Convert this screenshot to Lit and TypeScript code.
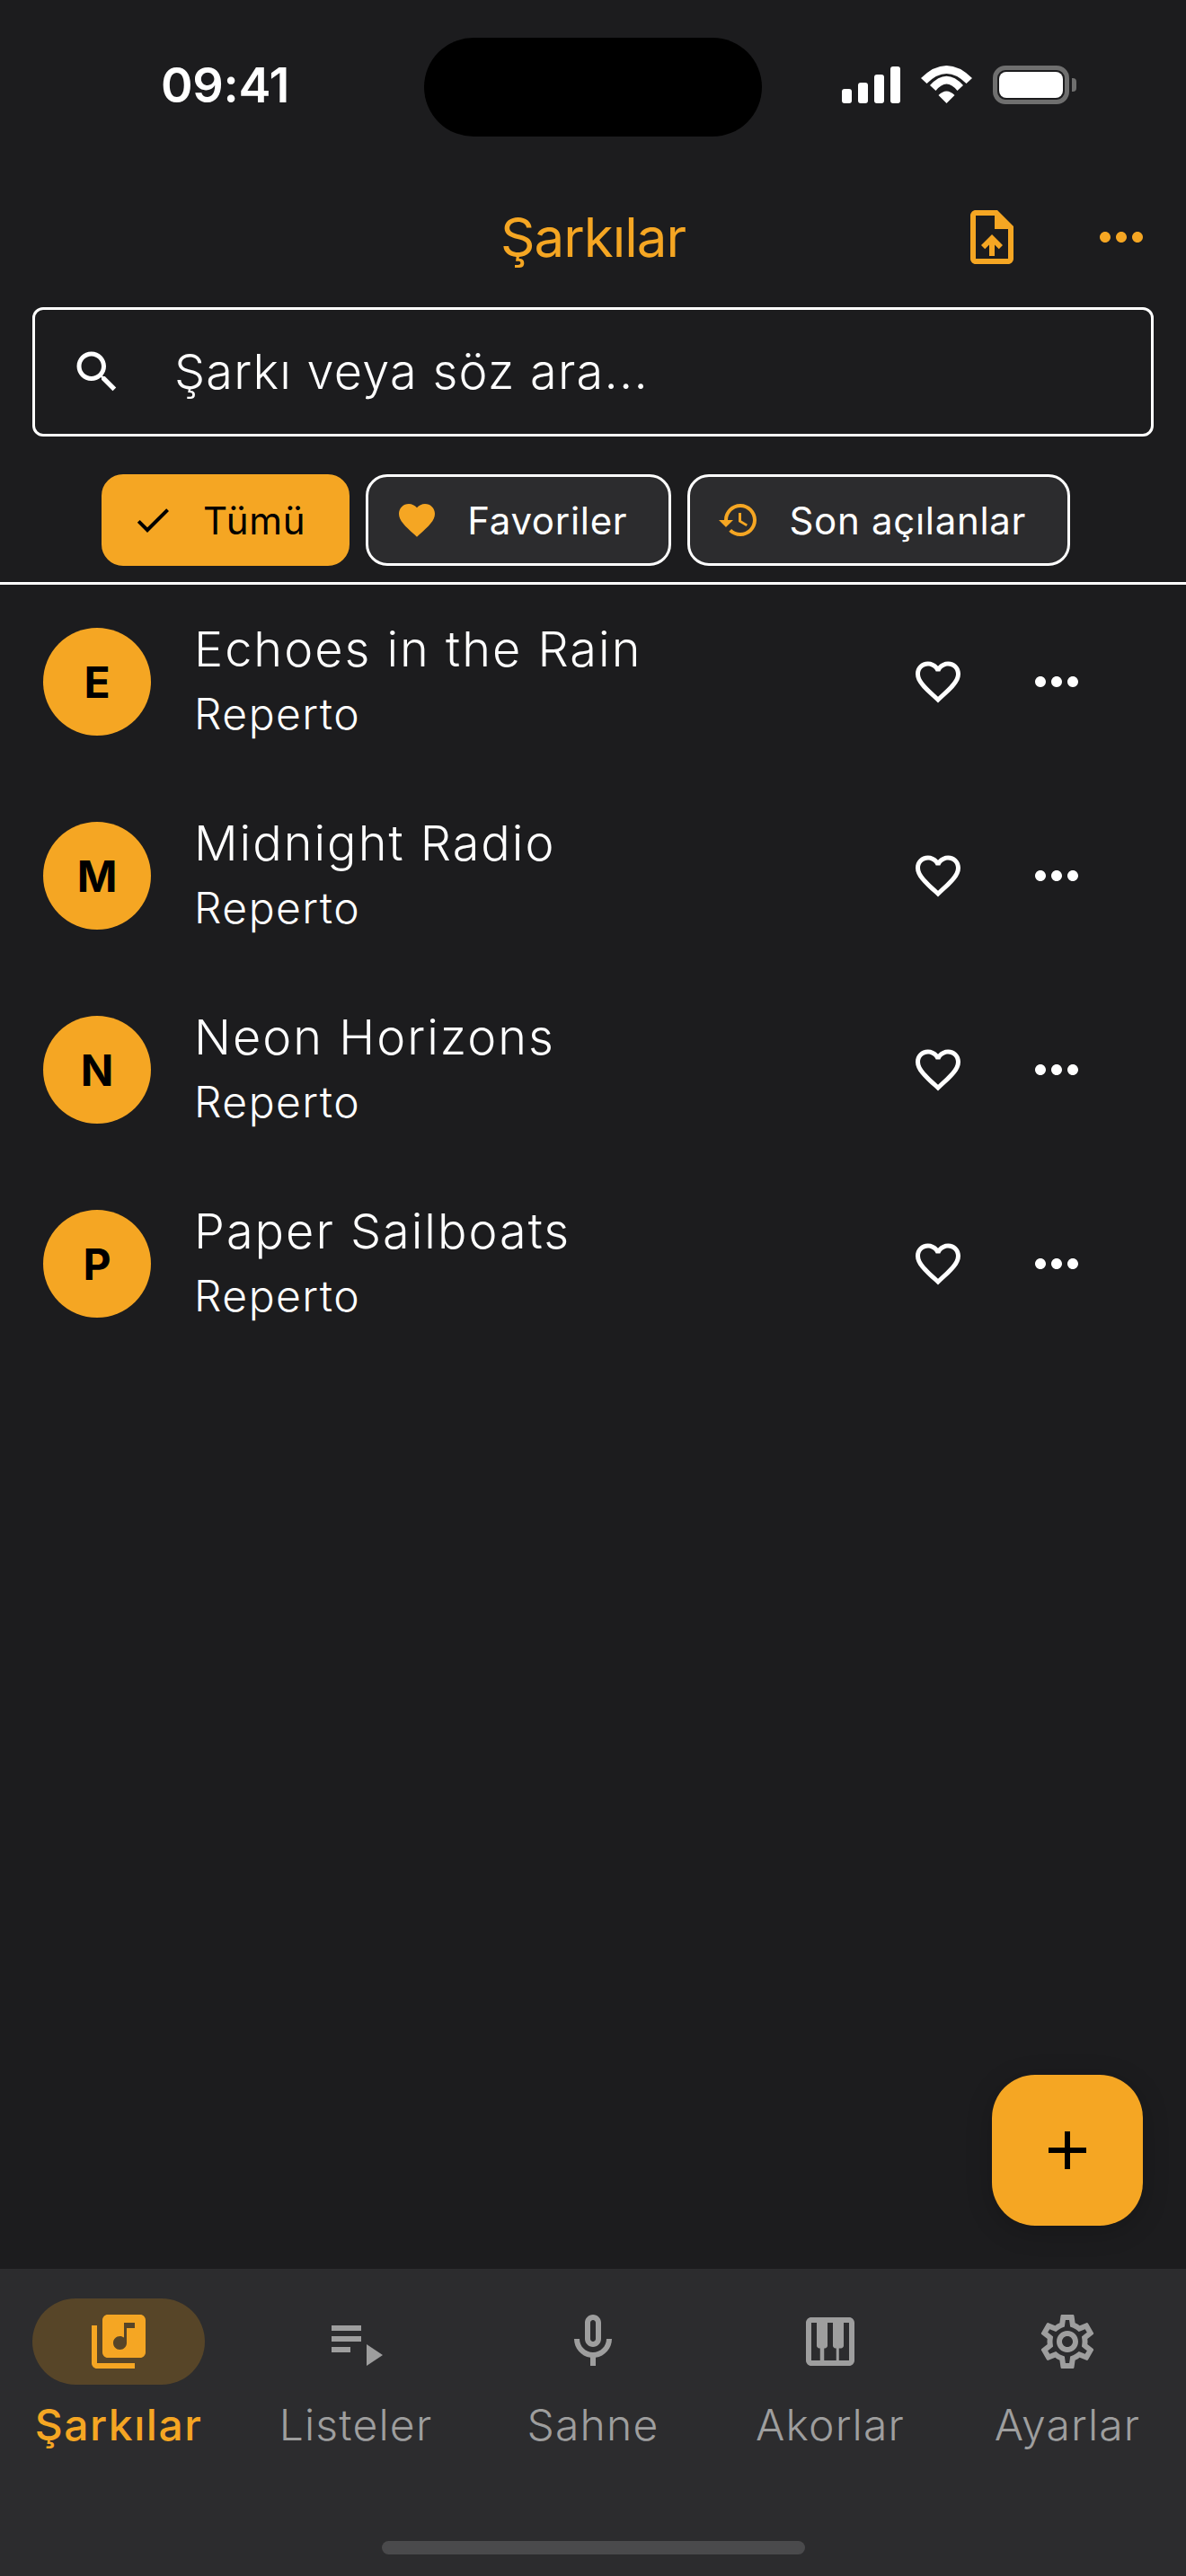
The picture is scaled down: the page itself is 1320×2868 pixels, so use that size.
import { LitElement, html, css, svg } from "lit";
import { customElement } from "lit/decorators.js";

const P = {
  upload: "M14 2H6c-1.1 0-2 .9-2 2v16c0 1.1.89 2 1.99 2H18c1.1 0 2-.9 2-2V8l-6-6zm4 18H6V4h7v5h5v11zM8 15.01l1.41 1.41L11 14.84V19h2v-4.16l1.59 1.59L16 15.01 12.01 11z",
  more: "M6 10c-1.1 0-2 .9-2 2s.9 2 2 2 2-.9 2-2-.9-2-2-2zm12 0c-1.1 0-2 .9-2 2s.9 2 2 2 2-.9 2-2-.9-2-2-2zm-6 0c-1.1 0-2 .9-2 2s.9 2 2 2 2-.9 2-2-.9-2-2-2z",
  search: "M15.5 14h-.79l-.28-.27C15.41 12.59 16 11.11 16 9.5 16 5.91 13.09 3 9.5 3S3 5.91 3 9.5 5.91 16 9.5 16c1.61 0 3.09-.59 4.23-1.57l.27.28v.79l5 4.99L20.49 19l-4.99-5zm-6 0C7.01 14 5 11.99 5 9.5S7.01 5 9.5 5 14 7.01 14 9.5 11.99 14 9.5 14z",
  check: "M9 16.17L4.83 12l-1.41 1.41L9 19 21 7l-1.41-1.41z",
  heart: "M12 21.35l-1.45-1.32C5.4 15.36 2 12.28 2 8.5 2 5.42 4.42 3 7.5 3c1.74 0 3.41.81 4.5 2.09C13.09 3.81 14.76 3 16.5 3 19.58 3 22 5.42 22 8.5c0 3.78-3.4 6.86-8.55 11.54L12 21.35z",
  heartO: "M16.5 3c-1.74 0-3.41.81-4.5 2.09C10.91 3.81 9.24 3 7.5 3 4.42 3 2 5.42 2 8.5c0 3.78 3.4 6.86 8.55 11.54L12 21.35l1.45-1.32C18.6 15.36 22 12.28 22 8.5 22 5.42 19.58 3 16.5 3zm-4.4 15.55l-.1.1-.1-.1C7.14 14.24 4 11.39 4 8.5 4 6.5 5.5 5 7.5 5c1.54 0 3.04.99 3.57 2.36h1.87C13.46 5.99 14.96 5 16.5 5c2 0 3.5 1.5 3.5 3.5 0 2.89-3.14 5.74-7.9 10.05z",
  history: "M13 3c-4.97 0-9 4.03-9 9H1l3.89 3.89.07.14L9 12H6c0-3.87 3.13-7 7-7s7 3.13 7 7-3.13 7-7 7c-1.93 0-3.68-.79-4.94-2.06l-1.42 1.42C8.27 19.99 10.51 21 13 21c4.97 0 9-4.03 9-9s-4.03-9-9-9zm-1 5v5l4.28 2.54.72-1.21-3.5-2.08V8H12z",
  add: "M19 13h-6v6h-2v-6H5v-2h6V5h2v6h6v2z",
  library: "M20 2H8c-1.1 0-2 .9-2 2v12c0 1.1.9 2 2 2h12c1.1 0 2-.9 2-2V4c0-1.1-.9-2-2-2zm-2 5h-3v5.5c0 1.38-1.12 2.5-2.5 2.5S10 13.88 10 12.5s1.12-2.5 2.5-2.5c.57 0 1.08.19 1.5.51V5h4v2zM4 6H2v14c0 1.1.9 2 2 2h14v-2H4V6z",
  playlist: "M3 10h11v2H3zM3 6h11v2H3zM3 14h7v2H3zM16 13v8l6-4z",
  mic: "M12 14c1.66 0 3-1.34 3-3V5c0-1.66-1.34-3-3-3S9 3.34 9 5v6c0 1.66 1.34 3 3 3zm-1-9c0-.55.45-1 1-1s1 .45 1 1v6c0 .55-.45 1-1 1s-1-.45-1-1V5zm6 6c0 2.76-2.24 5-5 5s-5-2.24-5-5H5c0 3.53 2.61 6.43 6 6.92V21h2v-3.08c3.39-.49 6-3.39 6-6.92h-2z",
  piano: "M19 3H5C3.9 3 3 3.9 3 5v14c0 1.1.9 2 2 2h14c1.1 0 2-.9 2-2V5C21 3.9 20.1 3 19 3zM14 14.5h.25V19h-4.5v-4.5H10c.55 0 1-.45 1-1V5h2v8.5C13 14.05 13.45 14.5 14 14.5zM5 5h2v8.5c0 .55.45 1 1 1h.25V19H5V5zM19 19h-3.75v-4.5H16c.55 0 1-.45 1-1V5h2V19z",
  gear: "M19.43 12.98c.04-.32.07-.64.07-.98 0-.34-.03-.66-.07-.98l2.11-1.65c.19-.15.24-.42.12-.64l-2-3.46c-.09-.16-.26-.25-.44-.25-.06 0-.12.01-.17.03l-2.49 1c-.52-.4-1.08-.73-1.69-.98l-.38-2.65C14.46 2.18 14.25 2 14 2h-4c-.25 0-.46.18-.49.42l-.38 2.65c-.61.25-1.17.59-1.69.98l-2.49-1c-.06-.02-.12-.03-.18-.03-.17 0-.34.09-.43.25l-2 3.46c-.13.22-.07.49.12.64l2.11 1.65c-.04.32-.07.65-.07.98 0 .33.03.66.07.98l-2.11 1.65c-.19.15-.24.42-.12.64l2 3.46c.09.16.26.25.44.25.06 0 .12-.01.17-.03l2.49-1c.52.4 1.08.73 1.69.98l.38 2.65c.03.24.24.42.49.42h4c.25 0 .46-.18.49-.42l.38-2.65c.61-.25 1.17-.59 1.69-.98l2.49 1c.06.02.12.03.18.03.17 0 .34-.09.43-.25l2-3.46c.12-.22.07-.49-.12-.64l-2.11-1.65zm-1.98-1.71c.04.31.05.52.05.73 0 .21-.02.43-.05.73l-.14 1.13.89.7 1.08.84-.7 1.21-1.27-.51-1.04-.42-.9.68c-.43.32-.84.56-1.25.73l-1.06.43-.16 1.13-.2 1.35h-1.4l-.19-1.35-.16-1.13-1.06-.43c-.43-.18-.83-.41-1.23-.71l-.91-.7-1.06.43-1.27.51-.7-1.21 1.08-.84.89-.7-.14-1.13c-.03-.31-.05-.54-.05-.74s.02-.43.05-.73l.14-1.13-.89-.7-1.08-.84.7-1.21 1.27.51 1.04.42.9-.68c.43-.32.84-.56 1.25-.73l1.06-.43.16-1.13.2-1.35h1.39l.19 1.35.16 1.13 1.06.43c.43.18.83.41 1.23.71l.91.7 1.06-.43 1.27-.51.7 1.21-1.07.85-.89.7.14 1.13zM12 8c-2.21 0-4 1.79-4 4s1.79 4 4 4 4-1.79 4-4-1.79-4-4-4zm0 6c-1.1 0-2-.9-2-2s.9-2 2-2 2 .9 2 2-.9 2-2 2z",
};

const ic = (d: string, cls: string) =>
  html`<svg class="ic ${cls}" viewBox="0 0 24 24" fill-rule="evenodd">${svg`<path d=${d}></path>`}</svg>`;

const songs = ["Echoes in the Rain", "Midnight Radio", "Neon Horizons", "Paper Sailboats"];
const chips = [
  { label: "Tümü", icon: P.check, on: true },
  { label: "Favoriler", icon: P.heart, on: false },
  { label: "Son açılanlar", icon: P.history, on: false },
];
const tabs = [
  { label: "Şarkılar", icon: P.library, on: true },
  { label: "Listeler", icon: P.playlist, on: false },
  { label: "Sahne", icon: P.mic, on: false },
  { label: "Akorlar", icon: P.piano, on: false },
  { label: "Ayarlar", icon: P.gear, on: false },
];

@customElement("app-root")
export class AppRoot extends LitElement {
  static styles = css`
    :host {
      display: block;
      width: 1320px;
      height: 2868px;
      background: #1c1c1e;
      font-family: Inter, "Noto Sans", sans-serif;
      color: #fff;
      overflow: hidden;
    }
    * { box-sizing: border-box; }
    .app { position: relative; height: 100%; display: flex; flex-direction: column; }
    .ic { display: block; flex: none; fill: currentColor; }
    .s72 { width: 72px; height: 72px; }
    .s60 { width: 60px; height: 60px; }
    .s48 { width: 48px; height: 48px; }

    .status { position: relative; height: 192px; flex: none; display: flex; align-items: flex-start; }
    .time { margin: 70px 0 0 179px; font-size: 54px; line-height: 50px; font-weight: 600; letter-spacing: -0.3px; }
    .island { position: absolute; left: 472px; top: 42px; width: 376px; height: 110px; border-radius: 55px; background: #000; }
    .sys { position: absolute; left: 937px; top: 73px; display: flex; align-items: flex-start; }
    .signal { display: flex; align-items: flex-end; gap: 7px; height: 42px; }
    .signal i { display: block; width: 11px; border-radius: 3px; background: #fff; }
    .b1 { height: 16px; } .b2 { height: 23px; } .b3 { height: 32px; } .b4 { height: 41px; }
    .wifi { width: 57px; height: 42px; margin-left: 23px; fill: #fff; display: block; }
    .batt { margin-left: 23px; width: 85px; height: 43px; border: 5px solid #6f6f6f; border-radius: 14px; padding: 2px; position: relative; }
    .batt b { display: block; height: 100%; background: #fff; border-radius: 8px; }
    .batt::after { content: ""; position: absolute; left: 83px; top: 9px; width: 5px; height: 15px; background: #6f6f6f; border-radius: 0 4px 4px 0; }

    .bar { height: 144px; flex: none; display: grid; grid-template-columns: 1fr auto 1fr; align-items: center; padding: 0 36px; color: #f5a623; }
    .title { font-size: 60px; font-weight: 400; line-height: 72px; grid-column: 2; letter-spacing: -1px; }
    .actions { grid-column: 3; display: flex; justify-content: flex-end; gap: 72px; }

    .search { flex: none; margin: 6px 36px 0; height: 144px; border: 3px solid #fff; border-radius: 12px; display: flex; align-items: center; padding-left: 39px; gap: 56px; }
    .search span { font-size: 54px; font-weight: 300; letter-spacing: 1.25px; line-height: 60px; }

    .chips { flex: none; display: flex; gap: 18px; padding: 42px 0 18px 113px; }
    .chip { height: 102px; display: flex; align-items: center; gap: 32px; padding: 0 46px 0 30px; border: 3px solid #fff; border-radius: 24px; background: #2c2c2e; color: #f5a623; }
    .chip span { color: #fff; font-size: 42px; font-weight: 400; letter-spacing: 0.7px; }
    .chip.on { background: #f5a623; border-color: #f5a623; color: #000; }
    .chip.on span { color: #000; }
    .rule { flex: none; height: 3px; background: #fff; }

    .list { flex: 1; min-height: 0; }
    .row { height: 216px; display: flex; align-items: center; padding: 0 108px 0 48px; }
    .av { width: 120px; height: 120px; flex: none; border-radius: 50%; background: #f5a623; color: #000; display: flex; align-items: center; justify-content: center; font-size: 48px; font-weight: 700; }
    .txt { flex: 1; margin-left: 48px; }
    .t1 { font-size: 54px; line-height: 72px; letter-spacing: 2px; font-weight: 300; }
    .t2 { font-size: 48px; line-height: 72px; letter-spacing: 1.5px; font-weight: 300; }
    .row .s72 { margin-left: 66px; }

    .fab { position: absolute; left: 1104px; top: 2310px; width: 168px; height: 168px; border-radius: 48px; background: #f5a623; color: #000; display: flex; align-items: center; justify-content: center; box-shadow: 0 6px 30px rgba(0,0,0,.2); }

    .nav { flex: none; height: 342px; background: #2c2c2e; padding-top: 33px; display: flex; flex-direction: column; }
    .tabs { display: grid; grid-template-columns: repeat(5, 264px); }
    .tab { display: flex; flex-direction: column; align-items: center; color: #9e9e9e; }
    .pill { width: 192px; height: 96px; border-radius: 48px; display: flex; align-items: center; justify-content: center; }
    .tab span { margin-top: 15px; font-size: 48px; line-height: 60px; letter-spacing: 1.2px; font-weight: 300; }
    .tab.on { color: #f5a623; }
    .tab.on .pill { background: #574528; }
    .tab.on span { font-weight: 500; letter-spacing: 1.5px; }
    .home { width: 471px; height: 15px; border-radius: 8px; background: #4a4a4c; margin: 99px auto 0; }
  `;

  render() {
    return html`<div class="app">
      <div class="status">
        <div class="time">09:41</div>
        <div class="island"></div>
        <div class="sys">
          <div class="signal"><i class="b1"></i><i class="b2"></i><i class="b3"></i><i class="b4"></i></div>
          <svg class="wifi" viewBox="0 0 57 42">
            <path d="M0 14Q28.5 -14 57 14L50.5 20Q28.5 -2 6.5 20Z"></path>
            <path d="M10 22Q28.5 1.5 47 22L40.5 28Q28.5 13 16.5 28Z"></path>
            <path d="M19.5 33Q28.5 24 37.5 33L28.5 42Z"></path>
          </svg>
          <div class="batt"><b></b></div>
        </div>
      </div>
      <div class="bar">
        <div class="title">Şarkılar</div>
        <div class="actions">${ic(P.upload, "s72")}${ic(P.more, "s72")}</div>
      </div>
      <div class="search">${ic(P.search, "s60")}<span>Şarkı veya söz ara...</span></div>
      <div class="chips">
        ${chips.map(
          (c) => html`<div class="chip ${c.on ? "on" : ""}">${ic(c.icon, "s48")}<span>${c.label}</span></div>`
        )}
      </div>
      <div class="rule"></div>
      <div class="list">
        ${songs.map(
          (s) => html`<div class="row">
            <div class="av">${s[0]}</div>
            <div class="txt"><div class="t1">${s}</div><div class="t2">Reperto</div></div>
            ${ic(P.heartO, "s60")}${ic(P.more, "s72")}
          </div>`
        )}
      </div>
      <div class="nav">
        <div class="tabs">
          ${tabs.map(
            (t) => html`<div class="tab ${t.on ? "on" : ""}">
              <div class="pill">${ic(t.icon, "s72")}</div>
              <span>${t.label}</span>
            </div>`
          )}
        </div>
        <div class="home"></div>
      </div>
      <div class="fab">${ic(P.add, "s72")}</div>
    </div>`;
  }
}
